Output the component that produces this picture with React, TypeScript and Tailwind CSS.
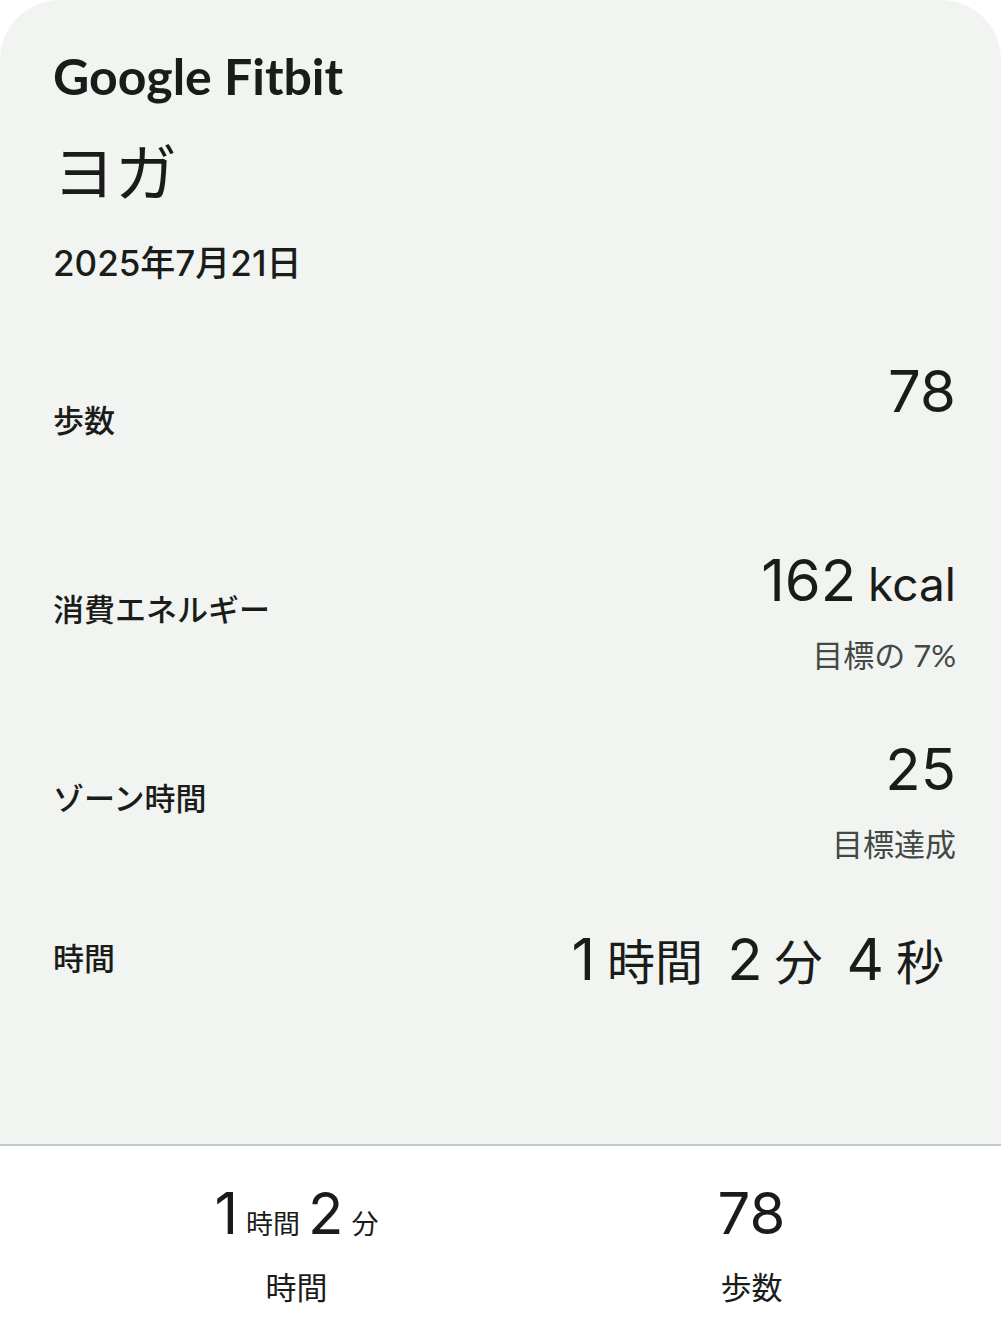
import React from 'react';

interface ValuePart {
  num: string;
  unit?: string;
}

interface Metric {
  label: string;
  parts: ValuePart[];
  note?: string;
}

const METRICS: Metric[] = [
  { label: '歩数', parts: [{ num: '78' }], note: '' },
  { label: '消費エネルギー', parts: [{ num: '162', unit: 'kcal' }], note: '目標の 7%' },
  { label: 'ゾーン時間', parts: [{ num: '25' }], note: '目標達成' },
];

const DURATION: ValuePart[] = [
  { num: '1', unit: '時間' },
  { num: '2', unit: '分' },
  { num: '4', unit: '秒' },
];

const MetricRow: React.FC<{ metric: Metric }> = ({ metric }) => (
  <div className="flex items-center justify-between">
    <dt className="text-[31px] leading-10 font-medium">{metric.label}</dt>
    <dd className="flex flex-col items-end gap-5">
      <div className="flex items-baseline gap-3 text-[58px] leading-[70px]">
        {metric.parts.map(part => (
          <React.Fragment key={part.num}>
            <span>{part.num}</span>
            {part.unit && <span className="text-[46px] leading-none">{part.unit}</span>}
          </React.Fragment>
        ))}
      </div>
      <div className="h-10 font-['Lato','Noto_Sans_CJK_JP',sans-serif] text-[31px] leading-10 text-[#424944]">
        {metric.note}
      </div>
    </dd>
  </div>
);

const App: React.FC = () => {
  return (
    <main className="flex min-h-screen flex-col bg-white font-['Inter','Noto_Sans_CJK_JP',sans-serif] text-[#1a1c1a]" lang="ja">
      <section className="rounded-t-[60px] border-b-2 border-[#c0c9c2] bg-[#f1f4f1] pt-11 pr-[45px] pb-[149px] pl-[53px]">
        <div className="font-['Lato',sans-serif] text-[50px] leading-[64px] font-bold">Google Fitbit</div>
        <h1 className="mt-6 text-[62px] leading-[84px]">ヨガ</h1>
        <p className="mt-[25px] text-[35px] leading-[44px] font-medium">2025年7月21日</p>

        <dl className="mt-[71px] flex flex-col gap-[59px]">
          {METRICS.map(metric => (
            <MetricRow key={metric.label} metric={metric} />
          ))}
          <div className="flex items-center justify-between">
            <dt className="text-[31px] leading-10 font-medium">時間</dt>
            <dd className="flex items-baseline gap-6 pr-3 text-[58px] leading-[72px]">
              {DURATION.map(part => (
                <span key={part.unit} className="flex items-baseline gap-3">
                  {part.num}
                  <span className="text-5xl leading-none">{part.unit}</span>
                </span>
              ))}
            </dd>
          </div>
        </dl>
      </section>

      <dl className="grid grid-cols-2 pt-8 pr-[22px] pb-6 pl-[69px] text-center">
        <div className="flex flex-col-reverse gap-5">
          <dt className="text-[31px] leading-10">時間</dt>
          <dd className="flex items-baseline justify-center gap-2 text-[58px] leading-[70px]">
            1<span className="text-[27px] leading-none">時間</span>
            2<span className="text-[27px] leading-none">分</span>
          </dd>
        </div>
        <div className="flex flex-col-reverse gap-5">
          <dt className="text-[31px] leading-10">歩数</dt>
          <dd className="text-[58px] leading-[70px]">78</dd>
        </div>
      </dl>
    </main>
  );
};

export default App;
